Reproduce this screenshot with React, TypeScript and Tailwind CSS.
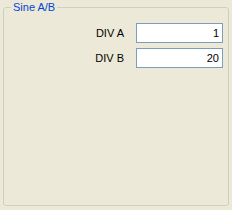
import React from "react";

export default function App() {
  const rows = [
    { label: "DIV A", value: "1" },
    { label: "DIV B", value: "20" },
  ];
  return (
    <div
      className="w-[232px] h-[210px] bg-[#ECE9D8] pt-px px-[3px] text-[11px] leading-[13px] text-black"
      style={{ fontFamily: '"Liberation Sans", Arial, sans-serif' }}
    >
      <fieldset className="h-[205px] border border-[#D0D0BF] rounded-[3px] p-0 m-0 min-w-0">
        <legend className="ml-[7px] px-[2px] text-[#0046D5] leading-[13px]">Sine A/B</legend>
        <div className="flex flex-col gap-[5px] items-end pr-[5px] mt-[9px]">
          {rows.map((r) => (
            <div key={r.label} className="flex items-center gap-[12px]">
              <span>{r.label}</span>
              <div className="w-[87px] h-[20px] border border-[#7F9DB9] bg-white flex items-center justify-end pr-[3px]">
                {r.value}
              </div>
            </div>
          ))}
        </div>
      </fieldset>
    </div>
  );
}
